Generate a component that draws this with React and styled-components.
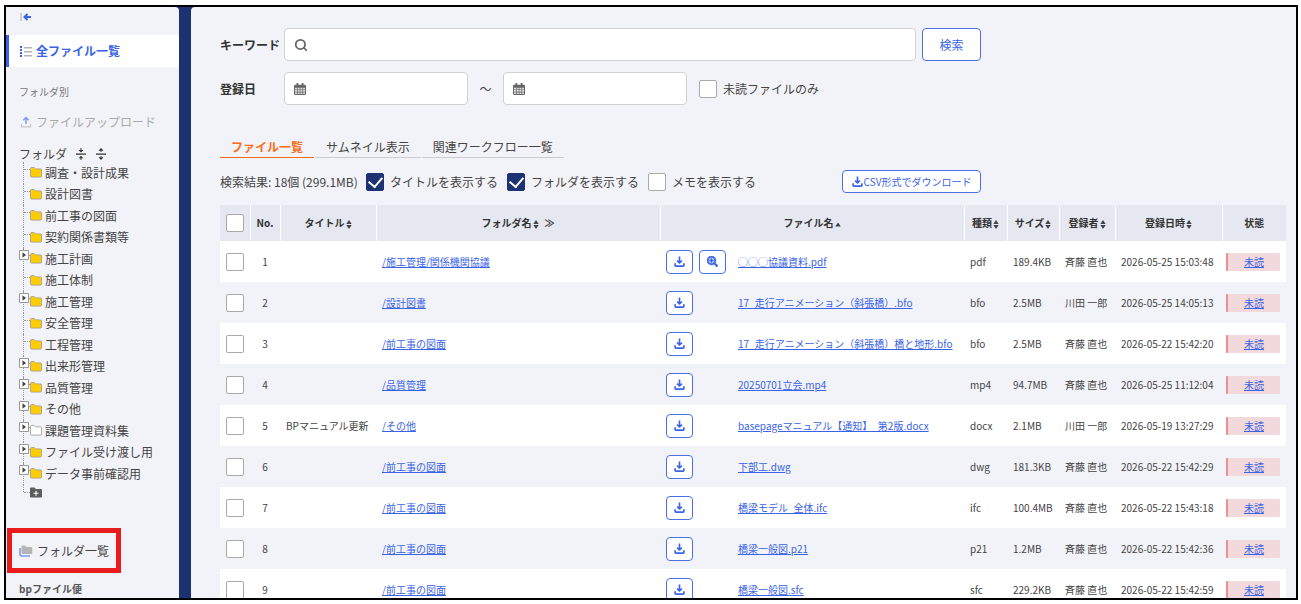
import React, { useState } from 'react';
import styled, { createGlobalStyle, css } from 'styled-components';
import { FaSearchPlus } from 'react-icons/fa';
import { Search } from 'lucide-react';

const GlobalStyle = createGlobalStyle`
  * {
    box-sizing: border-box;
  }

  body {
    margin: 0;
    background: #fff;
    color: #444;
    font-family: "Noto Sans CJK JP", "Noto Sans", sans-serif;
    font-size: 12px;
    line-height: 18px;
  }

  button,
  input {
    font: inherit;
    color: inherit;
  }
`;

const Page = styled.div`
  height: 100vh;
  padding: 5px 3px 4px 4px;
`;

const Frame = styled.div`
  display: flex;
  height: 100%;
  border: 2px solid #000;
  background: #1d3272;
  overflow: hidden;
`;

const Sidebar = styled.aside`
  flex: 0 0 173px;
  background: #f2f3f8;
  border-radius: 0 4px 0 0;
  overflow: hidden;
`;

const CollapseButton = styled.button`
  display: flex;
  align-items: center;
  height: 20px;
  margin-bottom: 8px;
  padding: 0 14px;
  border: 0;
  background: none;
`;

const NavLink = styled.a`
  display: flex;
  align-items: center;
  gap: 4px;
  height: 32px;
  padding-left: ${({ $active }) => ($active ? '11px' : '14px')};
  color: ${({ $muted }) => ($muted ? '#aaa' : '#444')};
  text-decoration: none;

  ${({ $active }) =>
    $active &&
    css`
      border-left: 3px solid #3a63e6;
      background: #fff;
      color: #3a63e6;
      font-weight: 700;
    `}
`;

const SectionLabel = styled.div`
  padding-left: 13px;
  color: ${({ $strong }) => ($strong ? '#555' : '#777')};
  font-size: 10px;
  font-weight: ${({ $strong }) => ($strong ? 700 : 400)};
`;

const FolderSection = styled.div`
  padding-top: 16px;

  ${NavLink} {
    margin-top: 5px;
  }
`;

const TreeHeader = styled.div`
  display: flex;
  align-items: center;
  gap: 8px;
  height: 17px;
  margin-top: 7px;
  padding-left: 13px;
`;

const TreeAction = styled.button`
  display: flex;
  padding: 0;
  border: 0;
  background: none;
`;

const Tree = styled.ul`
  display: flex;
  flex-direction: column;
  height: 344px;
  margin: 0;
  padding: 0;
  list-style: none;
`;

const TreeRow = styled.li`
  position: relative;
  display: flex;
  flex: 1;
  align-items: center;
  gap: 3px;
  padding-left: 24px;

  /* dotted trunk and branch of the tree */
  &::before {
    content: '';
    position: absolute;
    left: 17px;
    top: 0;
    bottom: 0;
    border-left: 1px dotted #999;
  }

  &::after {
    content: '';
    position: absolute;
    left: 18px;
    top: 7px;
    width: 6px;
    border-top: 1px dotted #999;
  }

  &:last-child ${TreeAction} {
    margin-bottom: 6px;
  }

  &:last-child::before {
    bottom: 14px;
  }
`;

const TreeToggle = styled.button`
  position: absolute;
  z-index: 1;
  left: 13px;
  top: 2px;
  display: flex;
  padding: 0;
  border: 0;
  background: none;
`;

const TreeLink = styled.a`
  color: #444;
  text-decoration: none;
`;

const Highlight = styled.div`
  width: 114px;
  margin: 22px 0 7px 1px;
  border: 5px solid #e81c1c;

  ${NavLink} {
    height: 35px;
    padding-left: 7px;
  }
`;

const Main = styled.main`
  flex: 1;
  min-width: 0;
  margin-left: 12px;
  padding: 21px 10px 0 29px;
  background: #f2f3f8;
  border-radius: 4px 0 0 0;
  overflow: hidden;
`;

const SearchForm = styled.form`
  display: grid;
  gap: 11px;
  max-width: 761px;
`;

const FormRow = styled.div`
  display: flex;
  align-items: center;
`;

const FormLabel = styled.label`
  flex: 0 0 64px;
  color: #333;
  font-weight: 700;
`;

const InputBox = styled.div`
  display: flex;
  align-items: center;
  flex: ${({ $wide }) => ($wide ? '1' : '0 0 184px')};
  height: 33px;
  padding: 0 9px;
  border: 1px solid #d0d0d0;
  border-radius: 4px;
  background: #fff;

  input {
    flex: 1;
    min-width: 0;
    margin-left: 6px;
    border: 0;
    outline: 0;
    background: none;
  }
`;

const Tilde = styled.span`
  flex: 0 0 35px;
  text-align: center;
`;

const SearchButton = styled.button`
  width: 59px;
  height: 33px;
  margin-left: 6px;
  border: 1px solid #4a70e8;
  border-radius: 4px;
  background: #fff;
  color: #3a63e6;
`;

const CheckLabel = styled.label`
  display: flex;
  align-items: center;
  gap: 6px;
  margin-left: ${({ $spaced }) => ($spaced ? '12px' : '0')};
`;

const Checkbox = styled.input.attrs({ type: 'checkbox' })`
  appearance: none;
  display: grid;
  place-items: center;
  flex: none;
  width: 18px;
  height: 18px;
  margin: 0;
  border: 1px solid #aaa;
  border-radius: 2px;
  background: #fff;

  &:checked {
    border-color: #1d3272;
    background: #1d3272;
  }

  &:checked::after {
    content: '';
    width: 7px;
    height: 11px;
    margin-bottom: 3px;
    border: solid #fff;
    border-width: 0 2px 2px 0;
    transform: rotate(40deg);
  }
`;

const Tabs = styled.nav`
  display: flex;
  gap: 1px;
  margin-top: 30px;
`;

const Tab = styled.a`
  height: 23px;
  padding: 3px 11px 0;
  border-bottom: 1px solid ${({ $active }) => ($active ? '#ff6a13' : '#ccc')};
  color: ${({ $active }) => ($active ? '#ff6a13' : '#444')};
  font-weight: ${({ $active }) => ($active ? 700 : 400)};
  text-decoration: none;
`;

const OptionBar = styled.div`
  display: flex;
  align-items: center;
  gap: 9px;
  max-width: 761px;
  height: 23px;
  margin: 12px 0;
`;

const ResultCount = styled.span`
  width: 137px;
  white-space: nowrap;
`;

const CsvButton = styled.button`
  display: flex;
  align-items: center;
  justify-content: center;
  gap: 1px;
  width: 139px;
  height: 23px;
  margin-left: auto;
  padding: 0;
  border: 1px solid #4a70e8;
  border-radius: 4px;
  background: #fff;
  color: #3a63e6;
  font-size: 10px;
`;

const Table = styled.table`
  width: 100%;
  table-layout: fixed;
  border-collapse: collapse;
  font-size: 10px;
  white-space: nowrap;
`;

const Th = styled.th`
  width: ${({ $width }) => ($width ? `${$width}px` : 'auto')};
  height: 36px;
  padding: 0;
  border-right: 1px solid #fff;
  background: #e5e8f1;
  color: #333;

  &:last-child {
    border-right: 0;
  }

  svg {
    margin-left: 1px;
    vertical-align: middle;
  }
`;

const HeadExpand = styled.span`
  margin-left: 6px;
`;

const Row = styled.tr`
  background: #fff;

  &:nth-child(even) {
    background: #f2f3f8;
  }
`;

const Td = styled.td`
  height: 41px;
  padding: ${({ $tight }) => ($tight ? '0 6px 0 4px' : '0 6px')};
  text-align: ${({ $center }) => ($center ? 'center' : 'left')};

  ${Checkbox} {
    margin: 0 auto;
  }
`;

const HeadCheck = styled(Checkbox)`
  margin: 0 auto;
`;

const TextLink = styled.a`
  color: #3a63e6;
  text-decoration: underline;
`;

const FileCell = styled.div`
  display: grid;
  grid-template-columns: 27px 27px 1fr;
  align-items: center;
  column-gap: 6px;

  ${TextLink} {
    grid-column: 3;
    margin-left: 6px;
  }
`;

const IconButton = styled.button`
  display: flex;
  align-items: center;
  justify-content: center;
  height: 24px;
  padding: 0;
  border: 1px solid #4a70e8;
  border-radius: 4px;
  background: #fff;
  color: #3a63e6;
`;

const Status = styled.div`
  height: 18px;
  border-left: 2px solid #ea8f92;
  border-radius: 1px;
  background: #f2d9db;
  text-align: center;
`;

const CollapseIcon = () => (
  <svg width="12" height="10" viewBox="0 0 12 10" fill="none">
    <path d="M1 1v8" stroke="#aaa" />
    <path d="M11 5H5M7.500 2 4.500 5l3 3" stroke="#3a63e6" strokeWidth="2" />
  </svg>
);

const ListIcon = () => (
  <svg width="12" height="11" viewBox="0 0 12 11">
    <path d="M0 0h2v2H0zM0 3h2v2H0zM0 6h2v2H0zM0 9h2v2H0z" fill="#3a63e6" />
    <path d="M4 1h8v1.500H4zM4 5h8v1.500H4zM4 9h8v1.500H4z" fill="#b5b5b5" />
  </svg>
);

const UploadIcon = () => (
  <svg width="12" height="12" viewBox="0 0 12 12" fill="none">
    <path d="M6 8V2M3.300 4.300 6 1.600l2.700 2.700" stroke="#7f9bf0" strokeWidth="1.500" />
    <path d="M1.500 8v2.800h9V8" stroke="#c3c3c8" strokeWidth="1.200" />
  </svg>
);

const DownloadIcon = () => (
  <svg
    width="11"
    height="11"
    viewBox="0 0 12 12"
    fill="none"
    stroke="currentColor"
    strokeWidth="1.800"
    strokeLinejoin="round"
  >
    <path d="M6 .5v7M3.400 5 6 7.600 8.600 5" />
    <path d="M1.200 8v2.200q0 .8.800.8h8q.8 0 .8-.8V8" />
  </svg>
);

const FoldIcon = ({ open }) => (
  <svg width="12" height="12" viewBox="0 0 12 12" fill="#333">
    <path d="M1 5.500h10v1.200H1z" />
    {open ? (
      <path d="M6 0 3.500 2.800h2V4h1V2.800h2zM6 12l2.500-2.800h-2V8h-1v1.200h-2z" />
    ) : (
      <path d="M6 4.500 3.500 2h2V0h1v2h2zM6 7.700l2.500 2.500h-2V12h-1v-1.800h-2z" />
    )}
  </svg>
);

const SortIcon = ({ direction }) => (
  <svg width="6" height="9" viewBox="0 0 6 9" fill="#444">
    {direction === 'asc' ? (
      <path d="M3 2.500 5.800 6.500H.2z" />
    ) : (
      <path d="M3 0 5.700 3.900H.3zM3 9 .3 5.100h5.400z" />
    )}
  </svg>
);

const FolderIcon = ({ fill = '#fc0' }) => (
  <svg width="12" height="11" viewBox="0 0 12 11">
    <path
      d="M.5 1.500q0-1 1-1h2.700l1.300 1.400h5q1 0 1 1v6.200q0 1-1 1h-9q-1 0-1-1z"
      fill={fill}
      stroke="#999"
      strokeWidth=".8"
    />
  </svg>
);

const AddFolderIcon = () => (
  <svg width="12" height="11" viewBox="0 0 12 11">
    <path d="M0 1.500Q0 .5 1 .5h3.500L6 2h5q1 0 1 1v6.500q0 1-1 1H1q-1 0-1-1z" fill="#5c5c5c" />
    <path d="M6 3.800v5M3.500 6.300h5" stroke="#fff" strokeWidth="1.100" />
  </svg>
);

const FoldersIcon = () => (
  <svg width="14" height="12" viewBox="0 0 14 12">
    <path d="M1 3v6q0 2 2 2h8" fill="none" stroke="#7f9bf0" strokeWidth="1.600" />
    <path d="M2.500 1.500Q2.500.5 3.500.5H6L7.500 2H12q1.300 0 1.300 1v5q0 1-1.300 1H3.500q-1 0-1-1z" fill="#b5b5b5" />
  </svg>
);

const ToggleIcon = () => (
  <svg width="10" height="10" viewBox="0 0 10 10">
    <path d="M.5.5h9v9h-9z" fill="#fff" stroke="#999" />
    <path d="M3.500 2.300 7 5 3.500 7.700z" fill="#444" />
  </svg>
);

const CalendarIcon = () => (
  <svg width="12" height="12" viewBox="0 0 12 12">
    <path d="M0 3q0-1.200 1.200-1.200h9.600Q12 1.800 12 3v7.800Q12 12 10.800 12H1.200Q0 12 0 10.800z" fill="#666" />
    <path d="M2.500 0h1.800v3H2.500zM7.700 0h1.800v3H7.700z" fill="#666" />
    <path
      d="M1 4.800h2v1.600H1zM3.700 4.800h2v1.600h-2zM6.400 4.800h2v1.600h-2zM9.100 4.800H11v1.600H9.100zM1 7.100h2v1.600H1zM3.700 7.100h2v1.600h-2zM6.400 7.100h2v1.600h-2zM9.100 7.100H11v1.600H9.100zM1 9.400h2V11H1zM3.700 9.400h2V11h-2zM6.400 9.400h2V11h-2zM9.100 9.400H11V11H9.100z"
      fill="#ddd"
    />
  </svg>
);

const folders = [
  { name: '調査・設計成果' },
  { name: '設計図書' },
  { name: '前工事の図面' },
  { name: '契約関係書類等' },
  { name: '施工計画', hasChildren: true },
  { name: '施工体制' },
  { name: '施工管理', hasChildren: true },
  { name: '安全管理' },
  { name: '工程管理' },
  { name: '出来形管理', hasChildren: true },
  { name: '品質管理', hasChildren: true },
  { name: 'その他', hasChildren: true },
  { name: '課題管理資料集', hasChildren: true, color: '#fff' },
  { name: 'ファイル受け渡し用', hasChildren: true },
  { name: 'データ事前確認用', hasChildren: true },
];

const columns = [
  { label: 'No.', width: 30 },
  { label: 'タイトル', width: 96, sort: 'both' },
  { label: 'フォルダ名', sort: 'both', expand: true },
  { label: 'ファイル名', width: 304, sort: 'asc' },
  { label: '種類', width: 43, sort: 'both' },
  { label: 'サイズ', width: 52, sort: 'both' },
  { label: '登録者', width: 56, sort: 'both' },
  { label: '登録日時', width: 107, sort: 'both' },
  { label: '状態', width: 64 },
];

const files = [
  { folder: '/施工管理/関係機関協議', name: '◯◯◯協議資料.pdf', type: 'pdf', size: '189.4KB', user: '斉藤 直也', date: '2026-05-25 15:03:48', preview: true },
  { folder: '/設計図書', name: '17_走行アニメーション（斜張橋）.bfo', type: 'bfo', size: '2.5MB', user: '川田 一郎', date: '2026-05-25 14:05:13' },
  { folder: '/前工事の図面', name: '17_走行アニメーション（斜張橋）橋と地形.bfo', type: 'bfo', size: '2.5MB', user: '斉藤 直也', date: '2026-05-22 15:42:20' },
  { folder: '/品質管理', name: '20250701立会.mp4', type: 'mp4', size: '94.7MB', user: '斉藤 直也', date: '2026-05-25 11:12:04' },
  { title: 'BPマニュアル更新', folder: '/その他', name: 'basepageマニュアル【通知】_第2版.docx', type: 'docx', size: '2.1MB', user: '川田 一郎', date: '2026-05-19 13:27:29' },
  { folder: '/前工事の図面', name: '下部工.dwg', type: 'dwg', size: '181.3KB', user: '斉藤 直也', date: '2026-05-22 15:42:29' },
  { folder: '/前工事の図面', name: '橋梁モデル_全体.ifc', type: 'ifc', size: '100.4MB', user: '斉藤 直也', date: '2026-05-22 15:43:18' },
  { folder: '/前工事の図面', name: '橋梁一般図.p21', type: 'p21', size: '1.2MB', user: '斉藤 直也', date: '2026-05-22 15:42:36' },
  { folder: '/前工事の図面', name: '橋梁一般図.sfc', type: 'sfc', size: '229.2KB', user: '斉藤 直也', date: '2026-05-22 15:42:59' },
];

const FolderTree = () => (
  <Tree>
    {folders.map((folder) => (
      <TreeRow key={folder.name}>
        {folder.hasChildren && (
          <TreeToggle type="button" aria-label={`${folder.name}を開く`}>
            <ToggleIcon />
          </TreeToggle>
        )}
        <FolderIcon fill={folder.color} />
        <TreeLink href="#folder">{folder.name}</TreeLink>
      </TreeRow>
    ))}
    <TreeRow>
      <TreeAction type="button" aria-label="フォルダを追加">
        <AddFolderIcon />
      </TreeAction>
    </TreeRow>
  </Tree>
);

const FileTable = () => (
  <Table>
    <thead>
      <tr>
        <Th $width={30}>
          <HeadCheck aria-label="すべて選択" />
        </Th>
        {columns.map((column) => (
          <Th key={column.label} $width={column.width}>
            {column.label}
            {column.sort && <SortIcon direction={column.sort} />}
            {column.expand && <HeadExpand>≫</HeadExpand>}
          </Th>
        ))}
      </tr>
    </thead>
    <tbody>
      {files.map((file, index) => (
        <Row key={file.name}>
          <Td>
            <Checkbox aria-label={`${file.name}を選択`} />
          </Td>
          <Td $center>{index + 1}</Td>
          <Td>{file.title}</Td>
          <Td>
            <TextLink href="#folder">{file.folder}</TextLink>
          </Td>
          <Td>
            <FileCell>
              <IconButton type="button" aria-label="ダウンロード">
                <DownloadIcon />
              </IconButton>
              {file.preview && (
                <IconButton type="button" aria-label="プレビュー">
                  <FaSearchPlus size={11} stroke="currentColor" strokeWidth={24} />
                </IconButton>
              )}
              <TextLink href="#file">{file.name}</TextLink>
            </FileCell>
          </Td>
          <Td>{file.type}</Td>
          <Td>{file.size}</Td>
          <Td>{file.user}</Td>
          <Td>{file.date}</Td>
          <Td $tight>
            <Status>
              <TextLink href="#status">未読</TextLink>
            </Status>
          </Td>
        </Row>
      ))}
    </tbody>
  </Table>
);

const App = () => {
  const [options, setOptions] = useState({ title: true, folder: true, memo: false });

  const toggle = (key) => () => setOptions((prev) => ({ ...prev, [key]: !prev[key] }));

  return (
    <>
      <GlobalStyle />
      <Page>
        <Frame>
          <Sidebar>
            <CollapseButton type="button" aria-label="メニューを閉じる">
              <CollapseIcon />
            </CollapseButton>
            <NavLink href="#all" $active>
              <ListIcon />
              全ファイル一覧
            </NavLink>
            <FolderSection>
              <SectionLabel>フォルダ別</SectionLabel>
              <NavLink href="#upload" $muted>
                <UploadIcon />
                ファイルアップロード
              </NavLink>
              <TreeHeader>
                フォルダ
                <TreeAction type="button" aria-label="すべて閉じる">
                  <FoldIcon />
                </TreeAction>
                <TreeAction type="button" aria-label="すべて開く">
                  <FoldIcon open />
                </TreeAction>
              </TreeHeader>
              <FolderTree />
            </FolderSection>
            <Highlight>
              <NavLink href="#folders">
                <FoldersIcon />
                フォルダ一覧
              </NavLink>
            </Highlight>
            <SectionLabel $strong>bpファイル便</SectionLabel>
          </Sidebar>
          <Main>
            <SearchForm onSubmit={(e) => e.preventDefault()}>
              <FormRow>
                <FormLabel htmlFor="keyword">キーワード</FormLabel>
                <InputBox $wide>
                  <Search size={14} strokeWidth={3} color="#666" />
                  <input id="keyword" type="text" />
                </InputBox>
                <SearchButton type="submit">検索</SearchButton>
              </FormRow>
              <FormRow>
                <FormLabel htmlFor="date-from">登録日</FormLabel>
                <InputBox>
                  <CalendarIcon />
                  <input id="date-from" type="text" />
                </InputBox>
                <Tilde>～</Tilde>
                <InputBox>
                  <CalendarIcon />
                  <input type="text" aria-label="登録日（終了）" />
                </InputBox>
                <CheckLabel $spaced>
                  <Checkbox />
                  未読ファイルのみ
                </CheckLabel>
              </FormRow>
            </SearchForm>
            <Tabs>
              <Tab href="#list" $active>ファイル一覧</Tab>
              <Tab href="#thumbnail">サムネイル表示</Tab>
              <Tab href="#workflow">関連ワークフロー一覧</Tab>
            </Tabs>
            <OptionBar>
              <ResultCount>検索結果: 18個 (299.1MB)</ResultCount>
              <CheckLabel>
                <Checkbox checked={options.title} onChange={toggle('title')} />
                タイトルを表示する
              </CheckLabel>
              <CheckLabel>
                <Checkbox checked={options.folder} onChange={toggle('folder')} />
                フォルダを表示する
              </CheckLabel>
              <CheckLabel>
                <Checkbox checked={options.memo} onChange={toggle('memo')} />
                メモを表示する
              </CheckLabel>
              <CsvButton type="button">
                <DownloadIcon />
                CSV形式でダウンロード
              </CsvButton>
            </OptionBar>
            <FileTable />
          </Main>
        </Frame>
      </Page>
    </>
  );
};

export default App;
